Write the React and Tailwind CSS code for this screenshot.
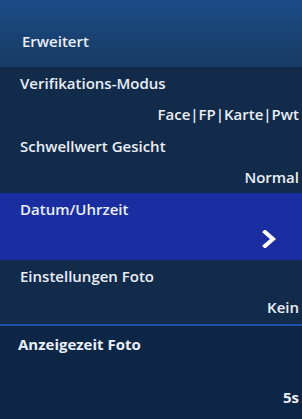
import React from 'react';

const rows = [
  { title: 'Verifikations-Modus', value: 'Face|FP|Karte|Pwt', h: 'h-[63px]' },
  { title: 'Schwellwert Gesicht', value: 'Normal', h: 'h-[63px]' },
  { title: 'Datum/Uhrzeit', chevron: true, h: 'h-[67px]', active: true },
  { title: 'Einstellungen Foto', value: 'Kein', h: 'h-[64px]' },
];

function Chevron() {
  return (
    <svg width="16" height="18" viewBox="0 0 16 18" className="mr-[22px]">
      <polyline points="4,2 12,9 4,16" fill="none" stroke="white" strokeWidth="4" strokeLinecap="square" strokeLinejoin="miter" />
    </svg>
  );
}

export default function App() {
  return (
    <div
      className="w-[302px] h-[419px] overflow-hidden text-[#e9eef7] bg-[#0e2646]"
      style={{ fontFamily: '"Open Sans", "Noto Sans", sans-serif' }}
    >
      {/* header */}
      <div className="h-[67px] bg-gradient-to-b from-[#1b4b86] to-[#173b63] pl-[22px] pt-[30px]">
        <div className="text-[15px] leading-[22px] font-semibold">Erweitert</div>
      </div>

      <div className="bg-[#132b4a]">
        {rows.map((r) => (
          <div
            key={r.title}
            className={`${r.h} flex flex-col pl-5 pr-[3px] pt-[6px] ${r.active ? 'bg-[#1a2ea2]' : ''}`}
          >
            <div className="text-[15px] leading-[20px] font-semibold">{r.title}</div>
            <div className="flex justify-end mt-[11px]">
              {r.chevron ? (
                <Chevron />
              ) : (
                <span className="text-[15px] leading-[20px] font-semibold">{r.value}</span>
              )}
            </div>
          </div>
        ))}
      </div>

      <div className="h-[2px] bg-[#1f4fae]" />

      <div className="flex flex-col pl-[18px] pr-[3px] pt-[7px]">
        <div className="text-[15px] leading-[22px] font-bold">Anzeigezeit Foto</div>
        <div className="flex justify-end mt-[32px]">
          <span className="text-[15px] leading-[20px] font-bold">5s</span>
        </div>
      </div>
    </div>
  );
}
